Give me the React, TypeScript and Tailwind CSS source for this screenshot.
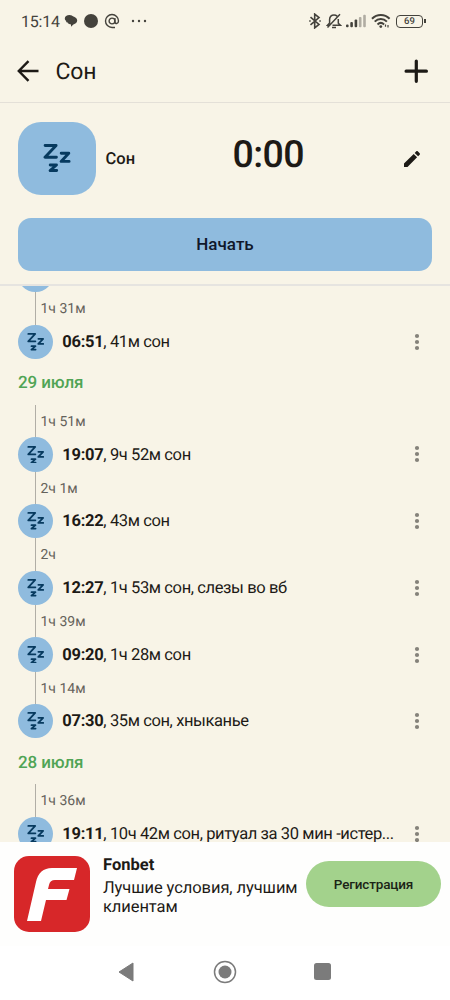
import React from 'react';

interface SleepEntry {
  gap: string;
  time: string;
  text: string;
}

const JULY_29: SleepEntry[] = [
  { gap: '1ч 51м', time: '19:07', text: '9ч 52м сон' },
  { gap: '2ч 1м', time: '16:22', text: '43м сон' },
  { gap: '2ч', time: '12:27', text: '1ч 53м сон, слезы во вб' },
  { gap: '1ч 39м', time: '09:20', text: '1ч 28м сон' },
  { gap: '1ч 14м', time: '07:30', text: '35м сон, хныканье' },
];

const App: React.FC = () => {
  return (
    <div className="flex h-[1000px] w-[450px] flex-col overflow-hidden bg-[#f8f4e7] font-['Roboto',sans-serif] text-[#1d1a16] [text-rendering:geometricPrecision]">
      <StatusBar />

      {/* Toolbar */}
      <header className="flex h-[61px] shrink-0 items-center border-b border-[#e4e0d8] pl-[17px] pr-[22px]">
        <svg width="22" height="22" viewBox="0 0 22 22" fill="none" stroke="currentColor" strokeWidth="2.4" className="relative -top-[1.5px]">
          <path d="M11.5 1.2 1.8 11l9.7 9.8M1.8 11H21.5" />
        </svg>
        <h1 className="relative -top-px ml-[16.5px] text-[23px] leading-none tracking-[-0.2px]">Сон</h1>
        <svg width="24" height="24" viewBox="0 0 24 24" fill="none" stroke="currentColor" strokeWidth="3.2" strokeLinecap="round" className="relative -top-[1.5px] ml-auto">
          <path d="M12.3 2v20.3M2.1 12.2h20.3" />
        </svg>
      </header>

      {/* Timer */}
      <section className="flex h-[183px] shrink-0 flex-col border-b-2 border-[#e6e4e0] px-[18px] pt-[19px]">
        <div className="flex h-[73px] items-center">
          <div className="flex h-[73px] w-[78px] items-center justify-center rounded-[23px] bg-[#8fbbde] pb-px">
            <SleepIcon size={28} />
          </div>
          <span className="relative top-[1.5px] ml-[9.5px] w-[127px] text-[16.5px] font-medium leading-none">Сон</span>
          <span className="relative -top-[2.5px] text-[37.5px] font-medium leading-none tracking-[-0.6px]">0:00</span>
          <svg width="18" height="18" viewBox="0 0 18 18" fill="currentColor" className="ml-auto mr-[11px]">
            <path d="M1 17v-3.500L10.700 3.900l3.400 3.400L4.500 17zM11.700 2.900l1.600-1.600c.4-.4 1-.4 1.400 0l2 2c.4.4.4 1 0 1.400l-1.600 1.600z" />
          </svg>
        </div>
        <button className="mt-[23px] h-[53px] shrink-0 rounded-[13px] bg-[#8fbbde] pt-px text-[17px] font-medium text-[#10182b]">
          Начать
        </button>
      </section>

      {/* History */}
      <main className="min-h-0 flex-1 overflow-hidden">
        <div className="-mt-[28.2px] flex flex-col">
          <div className="flex h-[34.5px] pl-[18.3px]">
            <SleepDot />
          </div>
          <Entry gap="1ч 31м" time="06:51" text="41м сон" />
          <DateLabel>29 июля</DateLabel>
          {JULY_29.map(entry => (
            <Entry key={entry.time} {...entry} />
          ))}
          <DateLabel>28 июля</DateLabel>
          <Entry gap="1ч 36м" time="19:11" text="10ч 42м сон, ритуал за 30 мин -истер..." />
        </div>
      </main>

      <AdBanner />

      {/* System navigation */}
      <nav className="flex h-[54px] shrink-0 items-center bg-white pl-[118px] text-[#7b7b7b]">
        <svg width="16" height="20" viewBox="0 0 16 20" fill="currentColor" stroke="currentColor" strokeLinejoin="round" className="relative -top-[1.5px]">
          <path d="M1 10 15 1v18z" />
        </svg>
        <svg width="24" height="24" viewBox="0 0 24 24" fill="none" stroke="currentColor" strokeWidth="1.5" className="relative -top-[1.5px] ml-[79px]">
          <circle cx="12" cy="12" r="10.5" />
          <circle cx="12" cy="12" r="6.5" fill="currentColor" stroke="none" />
        </svg>
        <div className="relative -top-[1.5px] ml-[77px] size-[16.5px] rounded-[2.5px] bg-current" />
      </nav>
    </div>
  );
};

const StatusBar = () => (
  <div className="flex h-[42px] shrink-0 items-center pl-[21px] pr-[24.5px] text-[#44423c]">
    <span className="relative top-[0.5px] w-[43px] text-[16px] leading-none tracking-[-0.2px]">15:14</span>
    <svg width="14" height="14" viewBox="0 0 14 14" fill="currentColor">
      <path d="M5.500 1C2.800 1 .8 2.500.8 4.400c0 1 .6 2 1.500 2.600l-.3 1.500 1.700-.9C3.300 4.700 5.600 3 9.500 3 8.700 1.700 7.300 1 5.500 1z" />
      <path d="M8 2.600c3 0 5.200 1.700 5.200 4 0 2-1.500 3.300-3.800 3.800L7 12.800v-2.200C4.500 10.300 2.800 8.800 2.800 6.600c0-2.300 2.200-4 5.200-4z" />
    </svg>
    <div className="ml-[6px] size-[14px] rounded-full bg-current" />
    <svg width="16" height="16" viewBox="0 0 16 16" fill="none" stroke="currentColor" strokeWidth="1.4" className="ml-[6px]">
      <circle cx="8" cy="8" r="2.9" />
      <path d="M10.900 5v3.600c0 2.800 3.600 2.400 3.600-.6A6.500 6.500 0 1 0 8 14.500h3" />
    </svg>
    <svg width="16" height="4" viewBox="0 0 16 4" fill="currentColor" className="ml-[11px]">
      <circle cx="2" cy="2" r="1.2" />
      <circle cx="8" cy="2" r="1.2" />
      <circle cx="14" cy="2" r="1.2" />
    </svg>

    <svg width="12" height="16" viewBox="0 0 12 16" fill="none" stroke="currentColor" strokeWidth="1.6" className="ml-auto">
      <path d="m1.500 4.200 8.500 7.300-4.300 3.400V1.100L10 4.500l-8.500 7.300" />
      <path d="M.2 8h1.500M10.300 8h1.500" />
    </svg>
    <svg width="16" height="16" viewBox="0 0 16 16" fill="none" stroke="currentColor" strokeWidth="1.5" className="ml-[5px]">
      <path d="M4.200 12.200H1.600L3.600 10V6.500C3.600 3.600 5.500 2 8 2c1.200 0 2.300.4 3.100 1.100M12.300 6v4.200l2 2H6.500M1.500 14.500 14 1.200" />
      <path d="M6 14.500h4" />
    </svg>
    <svg width="20" height="14" viewBox="0 0 20 14" fill="currentColor" className="ml-[4px]">
      <rect x="0" y="10.5" width="2.6" height="2.7" rx="1" />
      <rect x="4.3" y="8" width="2.6" height="5.2" rx="1" />
      <rect x="8.6" y="5.5" width="2.6" height="7.7" rx="1" />
      <rect x="12.9" y="3" width="2.6" height="10.2" rx="1" opacity=".4" />
      <rect x="17.2" y=".8" width="2.6" height="12.4" rx="1" opacity=".4" />
    </svg>
    <svg width="20" height="16" viewBox="0 0 20 16" fill="none" stroke="currentColor" strokeWidth="2" className="ml-[5px]">
      <path d="M1 5.700c5-5 12.600-5 17.600 0M3.700 8.600c3.500-3.400 8.700-3.400 12.200 0M6.500 11.400c2-1.800 4.600-1.800 6.600 0" />
      <circle cx="9.8" cy="13.6" r="1.4" fill="currentColor" stroke="none" />
      <path d="M14.500 13.800v-2.300M17 12v2.500" strokeWidth="1.2" />
    </svg>
    <div className="ml-[5px] flex h-[13px] w-[27px] items-center justify-center rounded-[4px] border border-current pt-px text-[9.5px] font-medium leading-none">
      69
    </div>
    <div className="ml-px h-[4px] w-[1.5px] bg-current" />
  </div>
);

const SleepIcon = ({ size }: { size: number }) => (
  <svg width={size} height={size} viewBox="0 0 27 28" fill="none" stroke="#073a5f" strokeWidth="2.9" strokeLinecap="round" strokeLinejoin="round">
    <path d="M1.600 1.500h11L1.500 13.300h11.400" />
    <path d="M17.700 9.300h7.600l-7.700 8.100h8" />
    <path d="M6.700 21H13l-6.400 5.500h6.600" />
  </svg>
);

const SleepDot = () => (
  <div className="flex size-[34.5px] shrink-0 items-center justify-center rounded-full bg-[#8fbbde]">
    <SleepIcon size={17.5} />
  </div>
);

const Entry = ({ gap, time, text }: SleepEntry) => (
  <div className="flex flex-col">
    <div className="ml-[35px] flex h-[32.2px] items-center border-l border-[#b1aea6] pl-[4.5px] pt-[1.5px] text-[14px] leading-none text-[#65625b]">
      {gap}
    </div>
    <div className="flex h-[34.5px] items-center pl-[18.3px]">
      <SleepDot />
      <p className="ml-[9.5px] w-[335px] whitespace-nowrap pt-[2.5px] text-[16.5px] leading-[24px] tracking-[-0.39px]">
        <b className="font-bold tracking-[-0.3px]">{time}</b>, {text}
      </p>
      <svg width="6" height="18" viewBox="0 0 6 18" fill="#85827a" className="ml-auto mr-[30px]">
        <circle cx="3" cy="3" r="2.1" />
        <circle cx="3" cy="9" r="2.1" />
        <circle cx="3" cy="15" r="2.1" />
      </svg>
    </div>
  </div>
);

const DateLabel = ({ children }: { children: React.ReactNode }) => (
  <h2 className="flex h-[46px] items-center pl-[18px] pt-[3.5px] text-[17px] font-medium leading-none tracking-[-0.1px] text-[#50a455]">{children}</h2>
);

const AdBanner = () => (
  <aside className="flex h-[104px] shrink-0 bg-[#fefefd] pl-[14px] pr-[9px]">
    <svg width="76" height="76" viewBox="0 0 76 76" className="mt-[14px] shrink-0">
      <rect width="76" height="76" rx="15" fill="#d72729" />
      <path d="M63 12 60 24H41q-5 0-6 5l-1 4h21.500l-3 11H32l-5 21H13l9-39q3-14 16-14z" fill="#fff" />
    </svg>
    <div className="ml-[13px] mt-[14px] w-[200px]">
      <h3 className="text-[16.5px] font-bold leading-[20px]">Fonbet</h3>
      <p className="mt-[3px] whitespace-nowrap text-[16.5px] leading-[19px] tracking-[-0.08px]">Лучшие условия, лучшим<br />клиентам</p>
    </div>
    <button className="ml-auto mt-[19px] h-[46px] w-[135px] shrink-0 rounded-full bg-[#a3d28c] pt-px text-[13.5px] font-medium tracking-[-0.15px] text-[#1b2416]">
      Регистрация
    </button>
  </aside>
);

export default App;
